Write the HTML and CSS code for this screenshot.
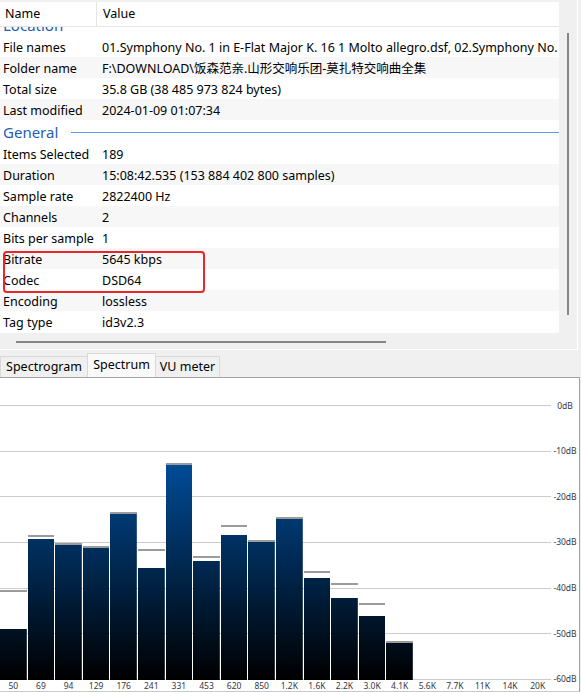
FILE: index.html
```html
<!DOCTYPE html>
<html>
<head>
<meta charset="utf-8">
<link rel="stylesheet" href="styles.css">
</head>
<body>
<div class="app">
  <section class="props">
    <div class="props-main">
      <div class="list">
        <div class="list-head">
          <div class="hcell hname">Name</div>
          <div class="hcell hvalue">Value</div>
        </div>
        <div class="list-body">
          <div class="list-scroll">
            <div class="group"><span class="group-title">Location</span><span class="group-rule"></span></div>
            <div class="row"><div class="k">File names</div><div class="v">01.Symphony No. 1 in E-Flat Major K. 16 1 Molto allegro.dsf, 02.Symphony No. 1 in E-Flat Major K. 16 2 Andante.dsf</div></div>
            <div class="row alt"><div class="k">Folder name</div><div class="v">F:\DOWNLOAD\饭森范亲.山形交响乐团-莫扎特交响曲全集</div></div>
            <div class="row"><div class="k">Total size</div><div class="v">35.8 GB (38 485 973 824 bytes)</div></div>
            <div class="row alt"><div class="k">Last modified</div><div class="v">2024-01-09 01:07:34</div></div>
            <div class="group"><span class="group-title">General</span><span class="group-rule"></span></div>
            <div class="row"><div class="k">Items Selected</div><div class="v">189</div></div>
            <div class="row alt"><div class="k">Duration</div><div class="v">15:08:42.535 (153 884 402 800 samples)</div></div>
            <div class="row"><div class="k">Sample rate</div><div class="v">2822400 Hz</div></div>
            <div class="row alt"><div class="k">Channels</div><div class="v">2</div></div>
            <div class="row"><div class="k">Bits per sample</div><div class="v">1</div></div>
            <div class="row alt"><div class="k">Bitrate</div><div class="v">5645 kbps</div></div>
            <div class="row"><div class="k">Codec</div><div class="v">DSD64</div></div>
            <div class="row alt"><div class="k">Encoding</div><div class="v">lossless</div></div>
            <div class="row"><div class="k">Tag type</div><div class="v">id3v2.3</div></div>
          </div>
        </div>
      </div>
      <div class="vscroll"><div class="vthumb"></div></div>
    </div>
    <div class="hscroll"><div class="hthumb"></div></div>
    <div class="mark"></div>
  </section>

  <section class="viz">
    <div class="tabs">
      <div class="tab t1">Spectrogram</div>
      <div class="tab t2 active">Spectrum</div>
      <div class="tab t3">VU meter</div>
    </div>
    <div class="chart">
      <div class="plot-row">
        <div class="plot">
          <div class="gridlines">
            <i></i><i></i><i></i><i></i><i></i><i></i><i></i>
          </div>
          <div class="bars">
            <div class="band"><i class="pk" style="margin-bottom:37px"></i><b class="bar" style="height:51px"></b></div>
            <div class="band"><i class="pk" style="margin-bottom:2px"></i><b class="bar" style="height:141px"></b></div>
            <div class="band"><i class="pk" style="margin-bottom:0px"></i><b class="bar" style="height:135px"></b></div>
            <div class="band"><i class="pk" style="margin-bottom:0px"></i><b class="bar" style="height:132px"></b></div>
            <div class="band"><i class="pk" style="margin-bottom:0px"></i><b class="bar" style="height:166px"></b></div>
            <div class="band"><i class="pk" style="margin-bottom:17px"></i><b class="bar" style="height:112px"></b></div>
            <div class="band"><i class="pk" style="margin-bottom:0px"></i><b class="bar" style="height:215px"></b></div>
            <div class="band"><i class="pk" style="margin-bottom:3px"></i><b class="bar" style="height:119px"></b></div>
            <div class="band"><i class="pk" style="margin-bottom:8px"></i><b class="bar" style="height:145px"></b></div>
            <div class="band"><i class="pk" style="margin-bottom:0px"></i><b class="bar" style="height:138px"></b></div>
            <div class="band"><i class="pk" style="margin-bottom:0px"></i><b class="bar" style="height:161px"></b></div>
            <div class="band"><i class="pk" style="margin-bottom:5px"></i><b class="bar" style="height:102px"></b></div>
            <div class="band"><i class="pk" style="margin-bottom:13px"></i><b class="bar" style="height:82px"></b></div>
            <div class="band"><i class="pk" style="margin-bottom:11px"></i><b class="bar" style="height:64px"></b></div>
            <div class="band"><i class="pk" style="margin-bottom:0px"></i><b class="bar" style="height:37px"></b></div>
            <div class="band"></div>
            <div class="band"></div>
            <div class="band"></div>
            <div class="band"></div>
            <div class="band"></div>
          </div>
        </div>
        <div class="dbaxis">
          <div class="db"><span>0dB</span></div>
          <div class="db"><span>-10dB</span></div>
          <div class="db"><span>-20dB</span></div>
          <div class="db"><span>-30dB</span></div>
          <div class="db"><span>-40dB</span></div>
          <div class="db"><span>-50dB</span></div>
          <div class="db"><span>-60dB</span></div>
        </div>
      </div>
      <div class="freqs">
        <span>50</span><span>69</span><span>94</span><span>129</span><span>176</span>
        <span>241</span><span>331</span><span>453</span><span>620</span><span>850</span>
        <span>1.2K</span><span>1.6K</span><span>2.2K</span><span>3.0K</span><span>4.1K</span>
        <span>5.6K</span><span>7.7K</span><span>11K</span><span>14K</span><span>20K</span>
      </div>
    </div>
  </section>
</div>
</body>
</html>
```

FILE: styles.css
```css
* { box-sizing: border-box; }

html, body {
  margin: 0;
  padding: 0;
  background: #f0f0f0;
}

body {
  width: 581px;
  height: 692px;
  overflow: hidden;
  font-family: "Noto Sans", "Noto Sans CJK SC", sans-serif;
  font-size: 12.5px;
  color: #000;
}

.app {
  display: flex;
  flex-direction: column;
}

/* ---------- properties panel ---------- */
.props {
  position: relative;
  width: 578px;
  height: 350px;
  padding-top: 2px;
  border-right: 1px solid #ffffff;
  border-bottom: 1px solid #ffffff;
  display: flex;
  flex-direction: column;
}

.props-main {
  display: flex;
  height: 331px;
}

.list {
  width: 559px;
  background: #ffffff;
  display: flex;
  flex-direction: column;
}

.list-head {
  height: 25px;
  display: flex;
  border-bottom: 1px solid #e5e5e5;
}

.hcell {
  line-height: 24px;
  white-space: nowrap;
}

.hname {
  width: 97px;
  padding-left: 5px;
  border-right: 1px solid #e5e5e5;
}

.hvalue {
  padding-left: 6px;
}

.list-body {
  height: 306px;
  overflow: hidden;
}

.list-scroll {
  margin-top: -14px;
}

.group {
  height: 23px;
  padding-top: 1px;
  display: flex;
  align-items: center;
}

.group-title {
  font-size: 15px;
  color: #1f5db6;
  padding-left: 3px;
  line-height: 22px;
}

.group-rule {
  flex: 1;
  height: 1px;
  margin-left: 13px;
  background: #5e9de0;
}

.row {
  height: 21px;
  display: flex;
  padding-top: 1px;
  line-height: 21px;
  white-space: nowrap;
  overflow: hidden;
}

.row.alt {
  background: #f7f7f7;
}

.k {
  width: 97px;
  flex: none;
  padding-left: 3px;
  overflow: hidden;
}

.v {
  flex: 1;
  padding-left: 5px;
  overflow: hidden;
}

.vscroll {
  width: 18px;
  padding-top: 31px;
  padding-left: 8px;
}

.vthumb {
  width: 2px;
  height: 282px;
  background: #868686;
}

.hscroll {
  height: 16px;
  padding-top: 8px;
  padding-left: 16px;
}

.hthumb {
  width: 370px;
  height: 2px;
  background: #868686;
}

.mark {
  position: absolute;
  left: 3px;
  top: 251px;
  width: 202px;
  height: 42px;
  border: 2px solid #e8262b;
  border-radius: 4px;
}

/* ---------- visualisation ---------- */
.viz {
  display: flex;
  flex-direction: column;
}

.tabs {
  height: 27px;
  display: flex;
  align-items: flex-end;
  white-space: nowrap;
}

.tab {
  height: 21px;
  line-height: 20px;
  border: 1px solid #d9d9d9;
  border-bottom: none;
  background: #f0f0f0;
  text-align: center;
}

.t1 { width: 87px; border-right: none; }
.t2 { width: 69px; }
.t3 { width: 64px; border-left: none; }

.tab.active {
  height: 24px;
  line-height: 21px;
  background: #f9f9f9;
}

.chart {
  width: 580px;
  background: #ffffff;
  border-top: 1px solid #a3a3a3;
  border-right: 1px solid #a0a0a0;
  border-bottom: 1px solid #c8c8c8;
  padding-top: 27px;
}

.plot-row {
  display: flex;
}

.plot {
  width: 551px;
  height: 275px;
  display: grid;
}

.gridlines,
.bars {
  grid-area: 1 / 1;
}

.gridlines {
  display: flex;
  flex-direction: column;
  justify-content: space-between;
}

.gridlines i {
  display: block;
  height: 1px;
  background: #cccccc;
}

.bars {
  display: grid;
  grid-template-columns: repeat(20, 1fr);
  column-gap: 1px;
}

.band {
  display: flex;
  flex-direction: column;
  justify-content: flex-end;
}

.pk {
  display: block;
  height: 2px;
  background: #9b9b9b;
}

.bar {
  display: block;
  background-image: linear-gradient(to top, #000000 0%, #0060c0 100%);
  background-size: 100% 275px;
  background-position: bottom;
  background-repeat: no-repeat;
}

.dbaxis {
  width: 28px;
  height: 275px;
  display: flex;
  flex-direction: column;
  justify-content: space-between;
}

.db {
  height: 1px;
  display: flex;
  align-items: center;
  justify-content: center;
  overflow: visible;
  font-size: 8.5px;
  color: #333845;
}

.db span {
  line-height: 10px;
  white-space: nowrap;
}

.freqs {
  width: 551px;
  height: 11px;
  display: grid;
  grid-template-columns: repeat(20, 1fr);
  column-gap: 1px;
  font-size: 8.5px;
  line-height: 11px;
  color: #333845;
  text-align: center;
  white-space: nowrap;
}
```
